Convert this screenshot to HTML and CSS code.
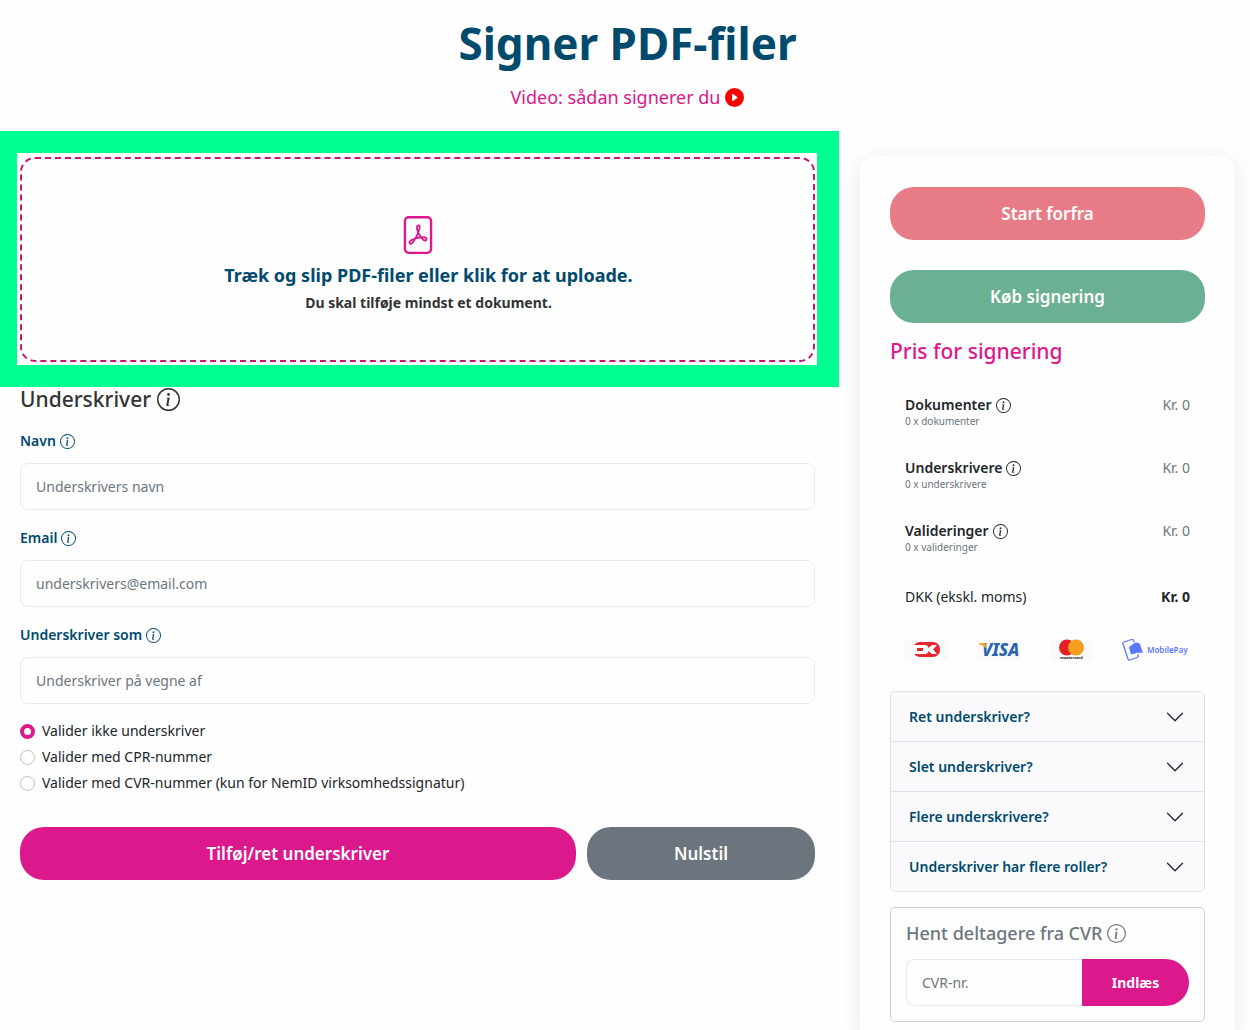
FILE: index.html
```html
<!DOCTYPE html>
<html lang="da">
<head>
    <meta charset="UTF-8">
    <meta name="viewport" content="width=device-width, initial-scale=1.0">
    <title>Signer PDF-filer</title>
    <link rel="stylesheet" href="styles.css">
</head>
<body>
    <svg class="sprite" aria-hidden="true">
        <symbol id="info" viewBox="0 0 16 16">
            <path d="M8 15A7 7 0 1 1 8 1a7 7 0 0 1 0 14zm0 1A8 8 0 1 0 8 0a8 8 0 0 0 0 16z"/>
            <path d="m8.93 6.588-2.29.287-.082.38.45.083c.294.07.352.176.288.469l-.738 3.468c-.194.897.105 1.319.808 1.319.545 0 1.178-.252 1.465-.598l.088-.416c-.2.176-.492.246-.686.246-.275 0-.375-.193-.304-.533L8.93 6.588zM9 4.500a1 1 0 1 1-2 0 1 1 0 0 1 2 0z"/>
        </symbol>
        <symbol id="chevron" viewBox="0 0 16 16">
            <path d="M1.646 4.646a.5.5 0 0 1 .708 0L8 10.293l5.646-5.647a.5.5 0 0 1 .708.708l-6 6a.5.5 0 0 1-.708 0l-6-6a.5.5 0 0 1 0-.708z"/>
        </symbol>
    </svg>

    <header class="page-header">
        <h1>Signer PDF-filer</h1>
        <a class="video-link" href="#video">Video: sådan signerer du
            <svg class="play" viewBox="0 0 16 16" aria-hidden="true"><path d="M16 8A8 8 0 1 1 0 8a8 8 0 0 1 16 0zM6.79 5.093A.5.5 0 0 0 6 5.5v5a.5.5 0 0 0 .79.407l3.5-2.5a.5.5 0 0 0 0-.814l-3.5-2.5z"/></svg>
        </a>
    </header>

    <div class="layout">
        <main>
            <div class="highlight">
                <button type="button" class="dropzone">
                    <svg class="pdf-icon" viewBox="0 0 16 16" aria-hidden="true">
                        <path d="M4 0a2 2 0 0 0-2 2v12a2 2 0 0 0 2 2h8a2 2 0 0 0 2-2V2a2 2 0 0 0-2-2H4zm0 1h8a1 1 0 0 1 1 1v12a1 1 0 0 1-1 1H4a1 1 0 0 1-1-1V2a1 1 0 0 1 1-1z"/>
                        <path d="M4.603 12.087a.81.81 0 0 1-.438-.42c-.195-.388-.13-.776.08-1.102.198-.307.526-.568.897-.787a7.68 7.68 0 0 1 1.482-.645 19.701 19.701 0 0 0 1.062-2.227 7.269 7.269 0 0 1-.43-1.295c-.086-.4-.119-.796-.046-1.136.075-.354.274-.672.65-.823.192-.077.4-.12.602-.077a.7.7 0 0 1 .477.365c.088.164.12.356.127.538.007.187-.012.395-.047.614-.084.51-.27 1.134-.52 1.794a10.954 10.954 0 0 0 .98 1.686 5.753 5.753 0 0 1 1.334.05c.364.065.734.195.96.465.12.144.193.32.2.518.007.192-.047.382-.138.563a1.04 1.04 0 0 1-.354.416.856.856 0 0 1-.51.138c-.331-.014-.654-.196-.933-.417a5.716 5.716 0 0 1-.911-.95 11.642 11.642 0 0 0-1.997.406 11.311 11.311 0 0 1-1.021 1.51c-.29.35-.608.655-.926.787a.793.793 0 0 1-.58.029zm1.379-1.901c-.166.076-.32.156-.459.238-.328.194-.541.383-.647.547-.094.145-.096.25-.04.361.01.022.02.036.026.044a.27.27 0 0 0 .035-.012c.137-.056.355-.235.635-.572a8.18 8.18 0 0 0 .45-.606zm1.64-1.33a12.647 12.647 0 0 1 1.01-.193 11.666 11.666 0 0 1-.51-.858 20.741 20.741 0 0 1-.5 1.05zm2.446.45c.15.163.296.3.435.41.24.19.407.253.498.256a.107.107 0 0 0 .07-.015.307.307 0 0 0 .094-.125.436.436 0 0 0 .059-.2.095.095 0 0 0-.026-.063c-.052-.062-.2-.152-.518-.209a3.881 3.881 0 0 0-.612-.053zM8.078 5.8a6.7 6.7 0 0 0 .2-.828c.031-.188.043-.343.038-.465a.613.613 0 0 0-.032-.198.517.517 0 0 0-.145.04c-.087.035-.158.106-.196.283-.04.192-.03.469.046.822.024.111.054.227.089.346z"/>
                    </svg>
                    <span class="drop-title">Træk og slip PDF-filer eller klik for at uploade.</span>
                    <span class="drop-note">Du skal tilføje mindst et dokument.</span>
                </button>
            </div>

            <form class="signer-form">
                <h2>Underskriver <svg class="info"><use href="#info"/></svg></h2>

                <label class="field-label" for="navn">Navn <svg class="info"><use href="#info"/></svg></label>
                <input class="text-input" type="text" id="navn" placeholder="Underskrivers navn">

                <label class="field-label" for="email">Email <svg class="info"><use href="#info"/></svg></label>
                <input class="text-input" type="email" id="email" placeholder="underskrivers@email.com">

                <label class="field-label" for="som">Underskriver som <svg class="info"><use href="#info"/></svg></label>
                <input class="text-input" type="text" id="som" placeholder="Underskriver på vegne af">

                <div class="radios">
                    <label><input type="radio" name="valider" checked> Valider ikke underskriver</label>
                    <label><input type="radio" name="valider"> Valider med CPR-nummer</label>
                    <label><input type="radio" name="valider"> Valider med CVR-nummer (kun for NemID virksomhedssignatur)</label>
                </div>

                <div class="form-buttons">
                    <button type="button" class="btn btn-primary">Tilføj/ret underskriver</button>
                    <button type="reset" class="btn btn-secondary">Nulstil</button>
                </div>
            </form>
        </main>

        <aside class="sidebar">
            <button type="button" class="btn btn-danger">Start forfra</button>
            <button type="button" class="btn btn-success">Køb signering</button>

            <h2>Pris for signering</h2>
            <ul class="prices">
                <li>
                    <div>
                        <h3>Dokumenter <svg class="info"><use href="#info"/></svg></h3>
                        <small>0 x dokumenter</small>
                    </div>
                    <span class="amount">Kr. 0</span>
                </li>
                <li>
                    <div>
                        <h3>Underskrivere <svg class="info"><use href="#info"/></svg></h3>
                        <small>0 x underskrivere</small>
                    </div>
                    <span class="amount">Kr. 0</span>
                </li>
                <li>
                    <div>
                        <h3>Valideringer <svg class="info"><use href="#info"/></svg></h3>
                        <small>0 x valideringer</small>
                    </div>
                    <span class="amount">Kr. 0</span>
                </li>
                <li class="total">
                    <span>DKK (ekskl. moms)</span>
                    <strong>Kr. 0</strong>
                </li>
            </ul>

            <div class="payments">
                <!-- Dankort -->
                <svg class="card-logo" viewBox="0 0 43 22" role="img" aria-label="Dankort">
                    <rect width="43" height="22" fill="#fafafb"/>
                    <rect x="8" y="3" width="27" height="15" rx="7" fill="#e8242f"/>
                    <path d="M8 6h12q3 0 3.500 3L27 6h5l-4 4.500 4 4.500h-5l-3.500-3q-.500 3-3.500 3H8z" fill="#fff"/>
                    <path d="M12 9h6v3h-6z" fill="#e8242f"/>
                </svg>
                <!-- Visa -->
                <svg class="card-logo" viewBox="0 0 43 22" role="img" aria-label="Visa">
                    <rect width="43" height="22" fill="#fafafb"/>
                    <text class="visa-text" x="5" y="17">VISA</text>
                    <path d="M2 4h5q2 0 2 2l1 4Q6 6 2 5z" fill="#f7a823"/>
                </svg>
                <!-- Mastercard -->
                <svg class="card-logo" viewBox="0 0 43 22" role="img" aria-label="Mastercard">
                    <rect width="43" height="22" fill="#fafafb"/>
                    <circle cx="17" cy="8.500" r="8" fill="#e31e26"/>
                    <circle cx="26" cy="8.500" r="8" fill="#f49d20"/>
                    <text class="mastercard-text" x="10" y="20">mastercard</text>
                </svg>
                <!-- MobilePay -->
                <svg class="mobilepay-logo" viewBox="0 0 68 24" role="img" aria-label="MobilePay">
                    <path d="M9.500 1.500 2 4Q.500 4.500 1 6l5 15q.500 1.500 2 1l7-2.500q1.500-.500 1-2L16 16M9.500 1.500q1.500-.500 2 1l1 2" fill="none" stroke="#5a78ff" stroke-width="1.300"/>
                    <path d="M7 9q3-2 4-3 4-3 7 0l3 9q-2-1-3 0-3-1-6 1-2-1-3 1z" fill="#5a78ff"/>
                    <text class="mobilepay-text" x="25" y="15">MobilePay</text>
                </svg>
            </div>

            <div class="accordion">
                <button type="button">Ret underskriver? <svg class="chevron"><use href="#chevron"/></svg></button>
                <button type="button">Slet underskriver? <svg class="chevron"><use href="#chevron"/></svg></button>
                <button type="button">Flere underskrivere? <svg class="chevron"><use href="#chevron"/></svg></button>
                <button type="button">Underskriver har flere roller? <svg class="chevron"><use href="#chevron"/></svg></button>
            </div>

            <form class="cvr-box">
                <label for="cvr">Hent deltagere fra CVR <svg class="info"><use href="#info"/></svg></label>
                <div class="input-group">
                    <input class="text-input" type="text" id="cvr" placeholder="CVR-nr.">
                    <button type="button">Indlæs</button>
                </div>
            </form>
        </aside>
    </div>
</body>
</html>
```
FILE: styles.css
```css
* {
    box-sizing: border-box;
}
body {
    margin: 0;
    font-family: "Noto Sans", "Open Sans", sans-serif;
    font-size: 14px;
    line-height: 22px;
    color: #212529;
    background-color: #fefefe;
}
h1, h2, h3, ul {
    margin: 0;
    padding: 0;
}
button, input {
    font-family: inherit;
}
button {
    cursor: pointer;
}
.sprite {
    display: none;
}
.page-header {
    height: 131px;
    padding: 15px 0 0 5px;
    text-align: center;
}
h1 {
    font-size: 44px;
    line-height: 56px;
    font-weight: 700;
    color: #004a6e;
}
.video-link {
    display: inline-flex;
    align-items: center;
    gap: 5px;
    margin-top: 13px;
    font-size: 18px;
    line-height: 27px;
    color: #db188c;
    text-decoration: none;
}
.play {
    width: 19px;
    height: 19px;
    fill: #f00;
}
.info {
    width: 15px;
    height: 15px;
    margin-left: 4px;
    fill: currentColor;
}
.layout {
    display: grid;
    grid-template-columns: minmax(0, 1fr) 375px;
    gap: 21px;
    padding-right: 15px;
}

/* Upload area */
.highlight {
    padding: 4px 2px 3px 3px;
    border: 22px solid #00ff90;
    border-left-width: 17px;
}
.dropzone {
    display: flex;
    flex-direction: column;
    align-items: center;
    width: 100%;
    height: 205px;
    padding: 57px 0 0;
    background: none;
    border: 2px dashed #c01873;
    border-radius: 15px;
}
.pdf-icon {
    width: 38px;
    height: 38px;
    fill: #db188c;
}
.drop-title {
    margin: 8px 0 3px 22px;
    font-size: 18px;
    line-height: 26px;
    font-weight: 700;
    color: #004a6e;
}
.drop-note {
    margin-left: 22px;
    font-size: 14px;
    line-height: 24px;
    font-weight: 700;
    color: #333;
}

/* Signer form */
.signer-form {
    padding: 0 24px 0 20px;
}
.signer-form h2 {
    display: flex;
    align-items: center;
    font-size: 21px;
    line-height: 24px;
    font-weight: 500;
    color: #333;
}
.signer-form h2 .info {
    width: 23px;
    height: 23px;
    margin-left: 6px;
}
.field-label {
    display: flex;
    align-items: center;
    height: 22px;
    margin: 17px 0 11px;
    font-weight: 600;
    color: #004a6e;
}
.signer-form h2 + .field-label {
    margin-top: 19px;
}
.text-input {
    display: block;
    width: 100%;
    height: 47px;
    padding: 0 15px;
    font-size: 14px;
    color: #333;
    background-color: #fefefe;
    border: 1px solid #e8eaed;
    border-radius: 8px;
}
.text-input::placeholder {
    color: #6c757d;
    opacity: 1;
}
.radios {
    margin: 14px 0 31px;
}
.radios label {
    display: flex;
    align-items: center;
    gap: 7px;
    height: 26px;
}
.radios input {
    appearance: none;
    width: 15px;
    height: 15px;
    margin: 0;
    background-color: #fff;
    border: 1px solid #bfbfbf;
    border-radius: 50%;
}
.radios input:checked {
    border: 4px solid #db188c;
}
.form-buttons {
    display: grid;
    grid-template-columns: 556fr 228fr;
    gap: 11px;
}
.btn {
    display: block;
    width: 100%;
    height: 53px;
    padding: 0;
    font-size: 17px;
    font-weight: 600;
    color: #fff;
    border: none;
    border-radius: 24px;
}
.btn-primary {
    background-color: #db188c;
}
.btn-secondary {
    background-color: #6c757d;
}
.btn-danger {
    margin-bottom: 30px;
    background-color: #e77c86;
}
.btn-success {
    background-color: #6bb093;
}

/* Sidebar */
.sidebar {
    margin-top: 25px;
    padding: 31px 30px 8px;
    border-radius: 15px 15px 0 0;
    box-shadow: 0 5px 20px rgba(50, 50, 90, 0.1);
}
.sidebar h2 {
    margin-top: 14px;
    font-size: 21px;
    line-height: 28px;
    font-weight: 500;
    color: #db188c;
}
.prices {
    padding: 29px 15px 0;
    list-style: none;
}
.prices li {
    display: flex;
    justify-content: space-between;
    height: 63px;
}
.prices h3 {
    display: flex;
    align-items: center;
    font-size: 14px;
    line-height: 22px;
    font-weight: 600;
}
.prices small {
    display: block;
    font-size: 10px;
    line-height: 11px;
    color: #6c757d;
}
.amount {
    color: #6c757d;
}
.prices .total {
    height: auto;
    padding-top: 3px;
}
.payments {
    display: flex;
    justify-content: space-between;
    align-items: center;
    height: 24px;
    margin: 30px 15px 29px;
}
.card-logo {
    width: 43px;
    height: 22px;
}
.mobilepay-logo {
    width: 68px;
    height: 24px;
}
.visa-text {
    font-size: 17px;
    font-weight: 800;
    font-style: italic;
    fill: #2865ae;
}
.mastercard-text {
    font-size: 4px;
    font-weight: 700;
    fill: #222;
}
.mobilepay-text {
    font-size: 8px;
    font-weight: 600;
    fill: #5a78ff;
}
.accordion {
    border: 1px solid #dee2e6;
    border-radius: 5px;
    overflow: hidden;
}
.accordion button {
    display: flex;
    justify-content: space-between;
    align-items: center;
    width: 100%;
    height: 49px;
    padding: 0 19px 0 18px;
    font-size: 14px;
    font-weight: 600;
    color: #004a6e;
    background-color: #fafafc;
    border: none;
}
.accordion button + button {
    height: 50px;
    border-top: 1px solid #dee2e6;
}
.chevron {
    width: 20px;
    height: 20px;
    fill: #212529;
}
.cvr-box {
    margin-top: 15px;
    padding: 13px 15px 15px;
    border: 1px solid #ced0d2;
    border-radius: 5px;
}
.cvr-box label {
    display: flex;
    align-items: center;
    margin-bottom: 14px;
    font-size: 18px;
    line-height: 24px;
    font-weight: 500;
    color: #6c757d;
}
.cvr-box .info {
    width: 19px;
    height: 19px;
}
.input-group {
    display: flex;
}
.input-group .text-input {
    flex: 1;
    min-width: 0;
    border-right: none;
    border-radius: 8px 0 0 8px;
}
.input-group button {
    width: 107px;
    font-size: 14px;
    font-weight: 700;
    color: #fff;
    background-color: #db188c;
    border: none;
    border-radius: 0 24px 24px 0;
}
```
